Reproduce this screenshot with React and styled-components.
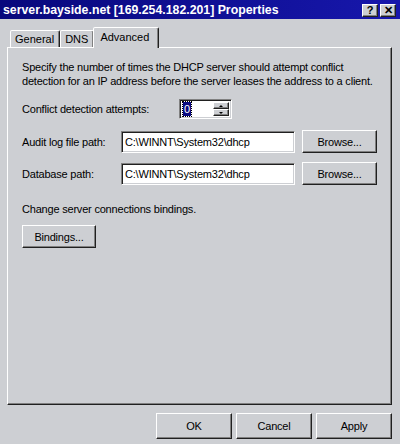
import React from "react";
import styled, { createGlobalStyle } from "styled-components";

const GRAY = "#cdcfd3";

const Global = createGlobalStyle`
  html, body {
    margin: 0;
    padding: 0;
    background: ${GRAY};
  }
  * { box-sizing: border-box; }
`;

const Window = styled.div`
  width: 400px;
  height: 444px;
  background: ${GRAY};
  display: flex;
  flex-direction: column;
  font-family: "Liberation Sans", Arial, sans-serif;
  font-size: 11px;
  letter-spacing: -0.2px;
  color: #000;
  overflow: hidden;
`;

const TitleBar = styled.div`
  height: 19px;
  flex: none;
  display: flex;
  align-items: center;
  justify-content: space-between;
  padding: 0 4px 0 3px;
  background: linear-gradient(90deg, #08087c, #1717ac);
`;

const Title = styled.div`
  color: #fff;
  font-weight: bold;
  font-size: 12.3px;
  letter-spacing: 0;
  white-space: nowrap;
`;

const TitleButtons = styled.div`
  display: flex;
  gap: 2px;
  margin-top: 2px;
`;

const TitleButton = styled.div`
  width: 16px;
  height: 13px;
  background: ${GRAY};
  border: 1px solid;
  border-color: #fff #202020 #202020 #fff;
  box-shadow: inset -1px -1px #808080;
  display: flex;
  align-items: center;
  justify-content: center;
  font-weight: bold;
  font-size: 11px;
  line-height: 1;
`;

const Body = styled.div`
  flex: none;
  padding: 8px 8px 0 7px;
`;

const TabStrip = styled.div`
  display: flex;
  align-items: flex-end;
  height: 20px;
  padding-left: 3px;
`;

const Tab = styled.div`
  position: relative;
  height: ${(p) => (p.$active ? "21px" : "17px")};
  margin: ${(p) => (p.$active ? "0 -2px -1px -1px" : "0")};
  z-index: ${(p) => (p.$active ? 2 : 1)};
  padding: ${(p) => (p.$active ? "2px 9px 0 6px" : "1px 5px 0 4px")};
  background: ${GRAY};
  border: 1px solid;
  border-bottom: none;
  border-color: #fff #202020 transparent #fff;
  box-shadow: inset -1px 0 #808080;
  border-radius: 2px 2px 0 0;
  line-height: 15px;
  letter-spacing: 0;
  white-space: nowrap;
`;

const Panel = styled.div`
  height: 358px;
  border: 1px solid;
  border-color: #fff #202020 #202020 #fff;
  box-shadow: inset -1px -1px #808080;
  padding: 12px 14px 0 14px;
  display: flex;
  flex-direction: column;
`;

const Text = styled.div`
  line-height: 14px;
  white-space: nowrap;
  margin-top: ${(p) => p.$mt || 0}px;
`;

const Row = styled.div`
  display: flex;
  align-items: center;
  margin-top: ${(p) => p.$mt || 0}px;
`;

const Label = styled.div`
  width: ${(p) => p.$w}px;
  flex: none;
`;

const Field = styled.div`
  width: ${(p) => p.$w}px;
  height: ${(p) => p.$h || 22}px;
  background: #fff;
  border: 1px solid;
  border-color: #808080 #fff #fff #808080;
  box-shadow: inset 1px 1px #202020, inset -1px -1px ${GRAY};
  padding: 2px 0 0 3px;
  line-height: 16px;
  display: flex;
  white-space: nowrap;
`;

const Button = styled.div`
  width: ${(p) => p.$w}px;
  height: ${(p) => p.$h || 23}px;
  margin-left: ${(p) => p.$ml || 0}px;
  flex: none;
  background: ${GRAY};
  border: 1px solid;
  border-color: #fff #202020 #202020 #fff;
  box-shadow: inset -1px -1px #808080;
  display: flex;
  align-items: center;
  justify-content: center;
`;

const SpinBox = styled(Field)`
  padding: 2px 2px 2px 3px;
  justify-content: space-between;
`;

const Selected = styled.span`
  background: #0a0a80;
  color: #fff;
  padding: 0 1px;
  line-height: 14px;
  height: 14px;
  outline: 1px dotted #000;
`;

const Spinner = styled.div`
  display: flex;
  flex-direction: column;
  width: 16px;
`;

const SpinButton = styled.div`
  flex: 1;
  background: ${GRAY};
  border: 1px solid;
  border-color: #fff #202020 #202020 #fff;
  box-shadow: inset -1px -1px #808080;
  display: flex;
  align-items: center;
  justify-content: center;
`;

const Arrow = styled.div`
  width: 0;
  height: 0;
  border-left: 2px solid transparent;
  border-right: 2px solid transparent;
  ${(p) => (p.$up ? "border-bottom: 2px solid #000;" : "border-top: 2px solid #000;")}
`;

const Footer = styled.div`
  display: flex;
  justify-content: flex-end;
  gap: 4px;
  padding: 8px 8px 0 0;
`;

const App = () => {
  return (
    <>
      <Global />
      <Window>
        <TitleBar>
          <Title>server.bayside.net [169.254.182.201] Properties</Title>
          <TitleButtons>
            <TitleButton>?</TitleButton>
            <TitleButton>✕</TitleButton>
          </TitleButtons>
        </TitleBar>
        <Body>
          <TabStrip>
            <Tab>General</Tab>
            <Tab>DNS</Tab>
            <Tab $active>Advanced</Tab>
          </TabStrip>
          <Panel>
            <Text>
              Specify the number of times the DHCP server should attempt conflict
              <br />
              detection for an IP address before the server leases the address to a client.
            </Text>
            <Row $mt={11}>
              <Label $w={157}>Conflict detection attempts:</Label>
              <SpinBox $w={53} $h={20}>
                <Selected>0</Selected>
                <Spinner>
                  <SpinButton><Arrow $up /></SpinButton>
                  <SpinButton><Arrow /></SpinButton>
                </Spinner>
              </SpinBox>
            </Row>
            <Row $mt={11}>
              <Label $w={99}>Audit log file path:</Label>
              <Field $w={176}>C:\WINNT\System32\dhcp</Field>
              <Button $w={75} $ml={7}>Browse...</Button>
            </Row>
            <Row $mt={9}>
              <Label $w={99}>Database path:</Label>
              <Field $w={176}>C:\WINNT\System32\dhcp</Field>
              <Button $w={75} $ml={7}>Browse...</Button>
            </Row>
            <Text $mt={17}>Change server connections bindings.</Text>
            <Row $mt={9}>
              <Button $w={74}>Bindings...</Button>
            </Row>
          </Panel>
        </Body>
        <Footer>
          <Button $w={76} $h={26}>OK</Button>
          <Button $w={76} $h={26}>Cancel</Button>
          <Button $w={76} $h={26}>Apply</Button>
        </Footer>
      </Window>
    </>
  );
};

export default App;
